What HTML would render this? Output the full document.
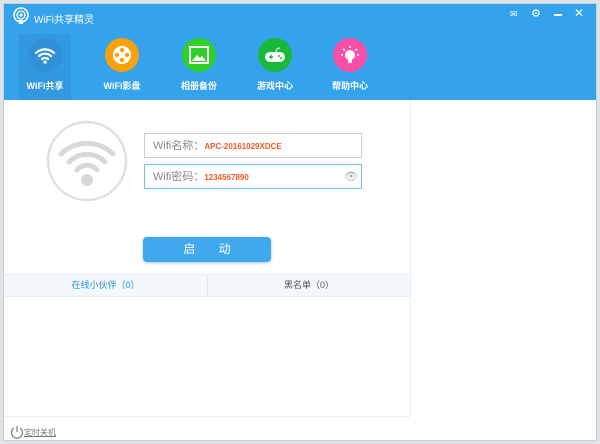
<!DOCTYPE html><html><head><meta charset="utf-8"><style>
*{margin:0;padding:0;box-sizing:border-box}
body{width:600px;height:444px;overflow:hidden;background:#dfe3e8;font-family:"Liberation Sans","Noto Sans CJK SC",sans-serif;position:relative}
.win{position:absolute;left:3px;top:3px;width:594px;height:438px;background:#fff;border:1px solid #c8d0d8}
.hdr{position:absolute;left:0;top:0;width:592px;height:96px;background:#35a3ec}
.title{position:absolute;left:30px;top:7px;color:#fff;font-size:10px}
.tab{position:absolute;top:30px;width:60px;text-align:center;color:#fff;font-size:9px;font-weight:bold}
.ic{width:34px;height:34px;border-radius:50%;margin:4px auto 7px;display:flex;align-items:center;justify-content:center}
.inp{position:absolute;left:140px;width:218px;height:25px;border:1px solid #ccc;font-size:11px;color:#888;padding:5px 8px;line-height:14px}
.inp b{color:#f05a28;font-size:8px}
</style></head><body>
<div class="win">
<div class="hdr">
<svg style="position:absolute;left:8px;top:3px" width="18" height="18" viewBox="0 0 18 18"><circle cx="9" cy="8" r="7" fill="none" stroke="#fff" stroke-width="1.5"/><circle cx="9" cy="8" r="4" fill="none" stroke="#fff" stroke-width="1.3"/><circle cx="9" cy="8" r="1.6" fill="#fff"/><rect x="7" y="13" width="4" height="4" fill="#fff"/></svg>
<div class="title">WiFi共享精灵</div>
<div style="position:absolute;left:506px;top:5px;color:#fff;font-size:9px">✉</div>
<div style="position:absolute;left:527px;top:3px;color:#fff;font-size:11px">⚙</div>
<div style="position:absolute;left:550px;top:10px;width:8px;height:2px;background:#fff"></div>
<div style="position:absolute;left:570px;top:2px;color:#fff;font-size:12px">✕</div>
<div style="position:absolute;left:15px;top:30px;width:52px;height:66px;background:#3399de"></div>
<div class="tab" style="left:11px"><div class="ic" style="background:#3190d6"><svg width="22" height="18" viewBox="0 0 22 18"><path d="M2 7a13 13 0 0 1 18 0M5 10a9 9 0 0 1 12 0M8 13a5 5 0 0 1 6 0" stroke="#fff" stroke-width="2.2" fill="none" stroke-linecap="round"/><circle cx="11" cy="16" r="1.6" fill="#fff"/></svg></div>WiFi共享</div>
<div class="tab" style="left:88px"><div class="ic" style="background:#f7a10c"><svg width="20" height="20"><circle cx="10" cy="10" r="9" fill="#fff"/><circle cx="10" cy="5" r="2.2" fill="#f7a10c"/><circle cx="10" cy="15" r="2.2" fill="#f7a10c"/><circle cx="5" cy="10" r="2.2" fill="#f7a10c"/><circle cx="15" cy="10" r="2.2" fill="#f7a10c"/></svg></div>WiFi影盘</div>
<div class="tab" style="left:165px"><div class="ic" style="background:#2dd12a"><svg width="20" height="18"><rect x="1" y="1" width="18" height="16" fill="none" stroke="#fff" stroke-width="2"/><path d="M3 15l5-6 3 3 2-2 4 5z" fill="#fff"/></svg></div>相册备份</div>
<div class="tab" style="left:241px"><div class="ic" style="background:#18b83a"><svg width="22" height="18"><path d="M12 6q0-4 4-4" stroke="#fff" fill="none"/><rect x="1" y="6" width="20" height="10" rx="5" fill="#fff"/><path d="M5 11h4M7 9v4" stroke="#18b83a" stroke-width="1.5"/><circle cx="15" cy="10" r="1" fill="#18b83a"/><circle cx="17" cy="12" r="1" fill="#18b83a"/></svg></div>游戏中心</div>
<div class="tab" style="left:316px"><div class="ic" style="background:#f94fa6"><svg width="20" height="20"><circle cx="10" cy="10" r="5" fill="#fff"/><rect x="8" y="14" width="4" height="4" fill="#fff"/><path d="M10 1v2M3 4l2 1.5M17 4l-2 1.5M1 10h2M17 10h2" stroke="#fff" stroke-width="1.5"/></svg></div>帮助中心</div>
</div>
<svg style="position:absolute;left:42px;top:116px" width="82" height="82"><circle cx="41" cy="41" r="39" fill="#fff" stroke="#e0e0e0" stroke-width="2.5"/><path d="M15 34a37 37 0 0 1 52 0M23 42a25 25 0 0 1 36 0M31 50a13 13 0 0 1 20 0" stroke="#d8d8d8" stroke-width="5" fill="none" stroke-linecap="round"/><circle cx="41" cy="60" r="6" fill="#d8d8d8"/></svg>
<div class="inp" style="top:129px">Wifi名称：<b>APC-20161029XDCE</b></div>
<div class="inp" style="top:160px;border-color:#6cc4e4">Wifi密码：<b>1234567890</b><span style="position:absolute;right:3px;top:5px;color:#aaa;font-size:11px">👁</span></div>
<div style="position:absolute;left:139px;top:233px;width:128px;height:25px;background:#40a9ee;border-radius:4px;color:#fff;font-size:12px;text-align:center;line-height:25px;box-shadow:0 1px 3px #9cd">启&nbsp;&nbsp;&nbsp;&nbsp;&nbsp;&nbsp;&nbsp;动</div>
<div style="position:absolute;left:0;top:270px;width:406px;height:23px;background:#f2f8fc;border-top:1px solid #e3eef5;border-bottom:1px solid #e3eef5;font-size:9px;line-height:21px">
<span style="position:absolute;left:0;width:203px;text-align:center;color:#2d8fd0">在线小伙伴（0）</span>
<span style="position:absolute;left:203px;width:203px;text-align:center;color:#555;border-left:1px solid #e0e6ea">黑名单（0）</span></div>
<div style="position:absolute;left:406px;top:96px;width:1px;height:316px;background:#eee"></div>
<div style="position:absolute;left:0;top:412px;width:406px;height:1px;background:#eee"></div>
<svg style="position:absolute;left:6px;top:421px" width="14" height="14"><path d="M4 3a5.5 5.5 0 1 0 6 0" stroke="#777" fill="none" stroke-width="1.2"/><path d="M7 1v6" stroke="#777" stroke-width="1.2"/></svg>
<div style="position:absolute;left:20px;top:423px;font-size:8px;color:#777;text-decoration:underline">定时关机</div>
</div>
</body></html>
